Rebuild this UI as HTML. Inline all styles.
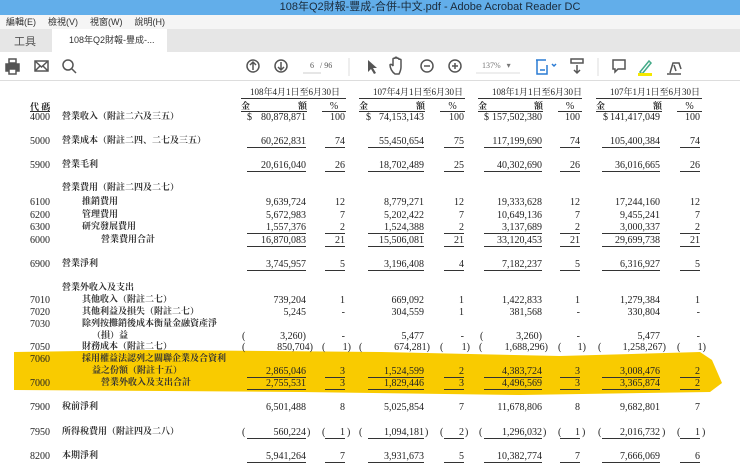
<!DOCTYPE html>
<html><head><meta charset="utf-8"><style>
*{margin:0;padding:0;box-sizing:border-box}
body{width:740px;height:474px;overflow:hidden;background:#fff;position:relative;font-family:"Liberation Serif","Noto Serif CJK SC",serif;color:#222}
.abs{position:absolute}
#title{left:0;top:0;width:740px;height:15px;background:#62aeea;color:#1a2a3a;font:11px "Liberation Sans","Noto Sans CJK TC",sans-serif;text-align:center;line-height:15px;padding-left:120px}
#menu{left:0;top:15px;width:740px;height:14px;background:#f5f5f5;font:9px "Liberation Sans","Noto Sans CJK TC",sans-serif;line-height:14px;color:#333}
#tabs{left:0;top:29px;width:740px;height:23px;background:#e6e6e6}
#tab{left:52px;top:29px;width:115px;height:24px;background:#fff;font:9px "Liberation Sans","Noto Sans CJK TC",sans-serif;line-height:23px;padding-left:17px;color:#333}
#tool{left:0;top:53px;width:740px;height:28px;background:#fff;border-bottom:1px solid #ddd}
.row{position:absolute;left:0;width:740px;height:12px;font-size:10px;line-height:12px}
.row span{position:absolute;top:0;white-space:nowrap;line-height:12px}
.cd{left:30px}
.row span.lb{font-family:"Noto Serif CJK SC","Liberation Serif",serif;font-size:9px;font-weight:bold;color:#333;top:-3px;line-height:14px}
.a1,.a2,.a3,.a4,.p1,.p2,.p3,.p4{text-align:right}
.a1{left:247px;width:59px}.p1{left:325px;width:20px}
.a2{left:368px;width:56px}.p2{left:444px;width:20px}
.a3{left:484px;width:58px}.p3{left:560px;width:20px}
.a4{left:602px;width:58px}.p4{left:680px;width:20px}
.row span.u{border-bottom:1px solid #333;line-height:11px;height:12px}
.hd span{height:11px;line-height:11px}
</style></head><body>
<div id="title" class="abs">108年Q2財報-豐成-合併-中文.pdf - Adobe Acrobat Reader DC</div>
<div id="menu" class="abs"><span style="margin-left:6px">編輯(E)</span><span style="margin-left:12px">檢視(V)</span><span style="margin-left:12px">視窗(W)</span><span style="margin-left:12px">說明(H)</span></div>
<div id="tabs" class="abs"><span style="position:absolute;left:14px;top:4px;font:11px 'Liberation Sans','Noto Sans CJK TC',sans-serif;color:#555">工具</span></div>
<div id="tab" class="abs">108年Q2財報-豐成-... <span style="margin-left:6px">×</span></div>
<div id="tool" class="abs">
<svg width="740" height="28" style="position:absolute;left:0;top:0" fill="none" stroke="#555" stroke-width="1.5">
<rect x="6" y="11" width="13" height="7" fill="#555"/><rect x="9" y="6" width="7" height="4"/><rect x="9" y="16" width="7" height="5" fill="#fff"/>
<rect x="35" y="8" width="13" height="10"/><path d="M35 8l6.5 6 6.5-6M35 18l5-5M48 18l-5-5"/>
<circle cx="68" cy="12" r="5"/><path d="M72 16l4 4"/>
<circle cx="253" cy="13" r="6"/><path d="M253 17v-8M250 12l3-3 3 3"/>
<circle cx="281" cy="13" r="6"/><path d="M281 9v8M278 14l3 3 3-3"/>
<path d="M303 20h18" stroke="#ccc" stroke-width="1"/>
<path d="M349 5v18" stroke="#ddd" stroke-width="1"/>
<path d="M368 7l0 12 3-3 3 5 2-1-3-5h4z" fill="#555" stroke="none"/>
<path d="M395 21c-3-2-5-6-5-9 0-1 2-1 3 1v-7c0-1 2-1 2 0v-1c0-1 2-1 2 0v1c0-1 2-1 2 0v1c0-1 2-1 2 0v7c0 3-1 5-2 7z"/>
<circle cx="427" cy="13" r="6"/><path d="M424 13h6"/>
<circle cx="455" cy="13" r="6"/><path d="M452 13h6M455 10v6"/>
<path d="M476 20h44" stroke="#ddd" stroke-width="1"/>
<path d="M536 7h10M537 7v14h10v-9M540 17h5" stroke="#2a7bd4"/>
<path d="M552 11l2 2 2-2" stroke="#2a7bd4"/>
<rect x="571" y="6" width="12" height="4"/><path d="M577 12v8M574 17l3 3 3-3"/>
<path d="M598 5v18" stroke="#ddd" stroke-width="1"/>
<path d="M613 7h12v9h-7l-3 3v-3h-2z"/>
<path d="M640 19l9-11 2 2-9 11z" stroke="#4a8"/><rect x="638" y="20" width="14" height="3" fill="#f4e800" stroke="none"/>
<path d="M670 20l3-10 6 0 2 6M667 21h14M674 12l2 6"/>
</svg>
<span style="position:absolute;left:310px;top:8px;font:8px 'Liberation Serif',serif;color:#555">6 &nbsp;&nbsp;/ 96</span>
<span style="position:absolute;left:482px;top:8px;font:8px 'Liberation Serif',serif;color:#777">137% &nbsp;&nbsp;▾</span>
</div>

<div class="row" style="top:86px"><span style="left:250px;font-size:9px">108年4月1日至6月30日</span><span style="left:373px;font-size:9px">107年4月1日至6月30日</span><span style="left:492px;font-size:9px">108年1月1日至6月30日</span><span style="left:610px;font-size:9px">107年1月1日至6月30日</span></div>
<div class="abs" style="left:241px;top:98px;width:105px;border-top:1px solid #333"></div>
<div class="abs" style="left:359px;top:98px;width:106px;border-top:1px solid #333"></div>
<div class="abs" style="left:478px;top:98px;width:104px;border-top:1px solid #333"></div>
<div class="abs" style="left:596px;top:98px;width:106px;border-top:1px solid #333"></div>
<div class="row hd" style="top:101px"><span class="cd" style="font-family:'Noto Serif CJK SC',serif;font-size:9px;font-weight:bold;border-bottom:1px solid #333">代 碼</span>
<span style="left:241px;width:66px;border-bottom:1px solid #333;font-weight:bold;font-size:9px">金<span style="right:0;position:absolute">額</span></span><span style="left:322px;width:24px;text-align:center;border-bottom:1px solid #333">%</span>
<span style="left:359px;width:66px;border-bottom:1px solid #333;font-weight:bold;font-size:9px">金<span style="right:0;position:absolute">額</span></span><span style="left:440px;width:25px;text-align:center;border-bottom:1px solid #333">%</span>
<span style="left:478px;width:65px;border-bottom:1px solid #333;font-weight:bold;font-size:9px">金<span style="right:0;position:absolute">額</span></span><span style="left:558px;width:24px;text-align:center;border-bottom:1px solid #333">%</span>
<span style="left:596px;width:66px;border-bottom:1px solid #333;font-weight:bold;font-size:9px">金<span style="right:0;position:absolute">額</span></span><span style="left:677px;width:25px;text-align:center;border-bottom:1px solid #333">%</span></div>

<svg class="abs" style="left:0;top:0" width="740" height="474"><path d="M14 352 L150 350 L380 352 L560 356 L700 352 L712 360 L722 383 L710 392 L520 395 L300 392 L14 390 Z" fill="#f9cb00"/></svg>

<div class="row" style="top:112px"><span class="cd">4000</span><span class="lb" style="left:62px">營業收入（附註二六及三五）</span><span style="left:247px">$</span><span class="a1">80,878,871</span><span class="p1">100</span><span style="left:366px">$</span><span class="a2">74,153,143</span><span class="p2">100</span><span style="left:484px">$</span><span class="a3">157,502,380</span><span class="p3">100</span><span style="left:603px">$</span><span class="a4">141,417,049</span><span class="p4">100</span></div>
<div class="row" style="top:136px"><span class="cd">5000</span><span class="lb" style="left:62px">營業成本（附註二四、二七及三五）</span><span class="a1 u">60,262,831</span><span class="p1 u">74</span><span class="a2 u">55,450,654</span><span class="p2 u">75</span><span class="a3 u">117,199,690</span><span class="p3 u">74</span><span class="a4 u">105,400,384</span><span class="p4 u">74</span></div>
<div class="row" style="top:160px"><span class="cd">5900</span><span class="lb" style="left:62px">營業毛利</span><span class="a1 u">20,616,040</span><span class="p1 u">26</span><span class="a2 u">18,702,489</span><span class="p2 u">25</span><span class="a3 u">40,302,690</span><span class="p3 u">26</span><span class="a4 u">36,016,665</span><span class="p4 u">26</span></div>
<div class="row" style="top:183px"><span class="lb" style="left:62px">營業費用（附註二四及二七）</span></div>
<div class="row" style="top:197px"><span class="cd">6100</span><span class="lb" style="left:82px">推銷費用</span><span class="a1">9,639,724</span><span class="p1">12</span><span class="a2">8,779,271</span><span class="p2">12</span><span class="a3">19,333,628</span><span class="p3">12</span><span class="a4">17,244,160</span><span class="p4">12</span></div>
<div class="row" style="top:210px"><span class="cd">6200</span><span class="lb" style="left:82px">管理費用</span><span class="a1">5,672,983</span><span class="p1">7</span><span class="a2">5,202,422</span><span class="p2">7</span><span class="a3">10,649,136</span><span class="p3">7</span><span class="a4">9,455,241</span><span class="p4">7</span></div>
<div class="row" style="top:222px"><span class="cd">6300</span><span class="lb" style="left:82px">研究發展費用</span><span class="a1 u">1,557,376</span><span class="p1 u">2</span><span class="a2 u">1,524,388</span><span class="p2 u">2</span><span class="a3 u">3,137,689</span><span class="p3 u">2</span><span class="a4 u">3,000,337</span><span class="p4 u">2</span></div>
<div class="row" style="top:235px"><span class="cd">6000</span><span class="lb" style="left:101px">營業費用合計</span><span class="a1 u">16,870,083</span><span class="p1 u">21</span><span class="a2 u">15,506,081</span><span class="p2 u">21</span><span class="a3 u">33,120,453</span><span class="p3 u">21</span><span class="a4 u">29,699,738</span><span class="p4 u">21</span></div>
<div class="row" style="top:259px"><span class="cd">6900</span><span class="lb" style="left:62px">營業淨利</span><span class="a1 u">3,745,957</span><span class="p1 u">5</span><span class="a2 u">3,196,408</span><span class="p2 u">4</span><span class="a3 u">7,182,237</span><span class="p3 u">5</span><span class="a4 u">6,316,927</span><span class="p4 u">5</span></div>
<div class="row" style="top:283px"><span class="lb" style="left:62px">營業外收入及支出</span></div>
<div class="row" style="top:295px"><span class="cd">7010</span><span class="lb" style="left:82px">其他收入（附註二七）</span><span class="a1">739,204</span><span class="p1">1</span><span class="a2">669,092</span><span class="p2">1</span><span class="a3">1,422,833</span><span class="p3">1</span><span class="a4">1,279,384</span><span class="p4">1</span></div>
<div class="row" style="top:307px"><span class="cd">7020</span><span class="lb" style="left:82px">其他利益及損失（附註二七）</span><span class="a1">5,245</span><span class="p1">-</span><span class="a2">304,559</span><span class="p2">1</span><span class="a3">381,568</span><span class="p3">-</span><span class="a4">330,804</span><span class="p4">-</span></div>
<div class="row" style="top:319px"><span class="cd">7030</span><span class="lb" style="left:82px">除列按攤銷後成本衡量金融資產淨</span></div>
<div class="row" style="top:331px"><span class="lb" style="left:92px">（損）益</span><span style="left:242px">(</span><span class="a1">3,260)</span><span class="p1">-</span><span class="a2">5,477</span><span class="p2">-</span><span style="left:480px">(</span><span class="a3">3,260)</span><span class="p3">-</span><span class="a4">5,477</span><span class="p4">-</span></div>
<div class="row" style="top:342px"><span class="cd">7050</span><span class="lb" style="left:82px">財務成本（附註二七）</span><span style="left:242px">(</span><span class="a1" style="width:66px">850,704)</span><span style="left:322px">(</span><span class="p1" style="width:26px">1)</span><span style="left:359px">(</span><span class="a2" style="width:62px">674,281)</span><span style="left:440px">(</span><span class="p2" style="width:26px">1)</span><span style="left:479px">(</span><span class="a3" style="width:64px">1,688,296)</span><span style="left:558px">(</span><span class="p3" style="width:26px">1)</span><span style="left:598px">(</span><span class="a4" style="width:64px">1,258,267)</span><span style="left:677px">(</span><span class="p4" style="width:26px">1)</span></div>
<div class="row" style="top:354px"><span class="cd">7060</span><span class="lb" style="left:82px">採用權益法認列之關聯企業及合資利</span></div>
<div class="row" style="top:366px"><span class="lb" style="left:92px">益之份額（附註十五）</span><span class="a1 u">2,865,046</span><span class="p1 u">3</span><span class="a2 u">1,524,599</span><span class="p2 u">2</span><span class="a3 u">4,383,724</span><span class="p3 u">3</span><span class="a4 u">3,008,476</span><span class="p4 u">2</span></div>
<div class="row" style="top:378px"><span class="cd">7000</span><span class="lb" style="left:101px">營業外收入及支出合計</span><span class="a1 u">2,755,531</span><span class="p1 u">3</span><span class="a2 u">1,829,446</span><span class="p2 u">3</span><span class="a3 u">4,496,569</span><span class="p3 u">3</span><span class="a4 u">3,365,874</span><span class="p4 u">2</span></div>
<div class="row" style="top:402px"><span class="cd">7900</span><span class="lb" style="left:62px">稅前淨利</span><span class="a1">6,501,488</span><span class="p1">8</span><span class="a2">5,025,854</span><span class="p2">7</span><span class="a3">11,678,806</span><span class="p3">8</span><span class="a4">9,682,801</span><span class="p4">7</span></div>
<div class="row" style="top:427px"><span class="cd">7950</span><span class="lb" style="left:62px">所得稅費用（附註四及二八）</span><span style="left:242px">(</span><span class="a1 u">560,224</span><span style="left:307px">)</span><span style="left:322px">(</span><span class="p1 u">1</span><span style="left:347px">)</span><span style="left:359px">(</span><span class="a2 u">1,094,181</span><span style="left:425px">)</span><span style="left:440px">(</span><span class="p2 u">2</span><span style="left:465px">)</span><span style="left:479px">(</span><span class="a3 u">1,296,032</span><span style="left:543px">)</span><span style="left:558px">(</span><span class="p3 u">1</span><span style="left:582px">)</span><span style="left:598px">(</span><span class="a4 u">2,016,732</span><span style="left:662px">)</span><span style="left:677px">(</span><span class="p4 u">1</span><span style="left:702px">)</span></div>
<div class="row" style="top:451px"><span class="cd">8200</span><span class="lb" style="left:62px">本期淨利</span><span class="a1 u">5,941,264</span><span class="p1 u">7</span><span class="a2 u">3,931,673</span><span class="p2 u">5</span><span class="a3 u">10,382,774</span><span class="p3 u">7</span><span class="a4 u">7,666,069</span><span class="p4 u">6</span></div>
</body></html>
